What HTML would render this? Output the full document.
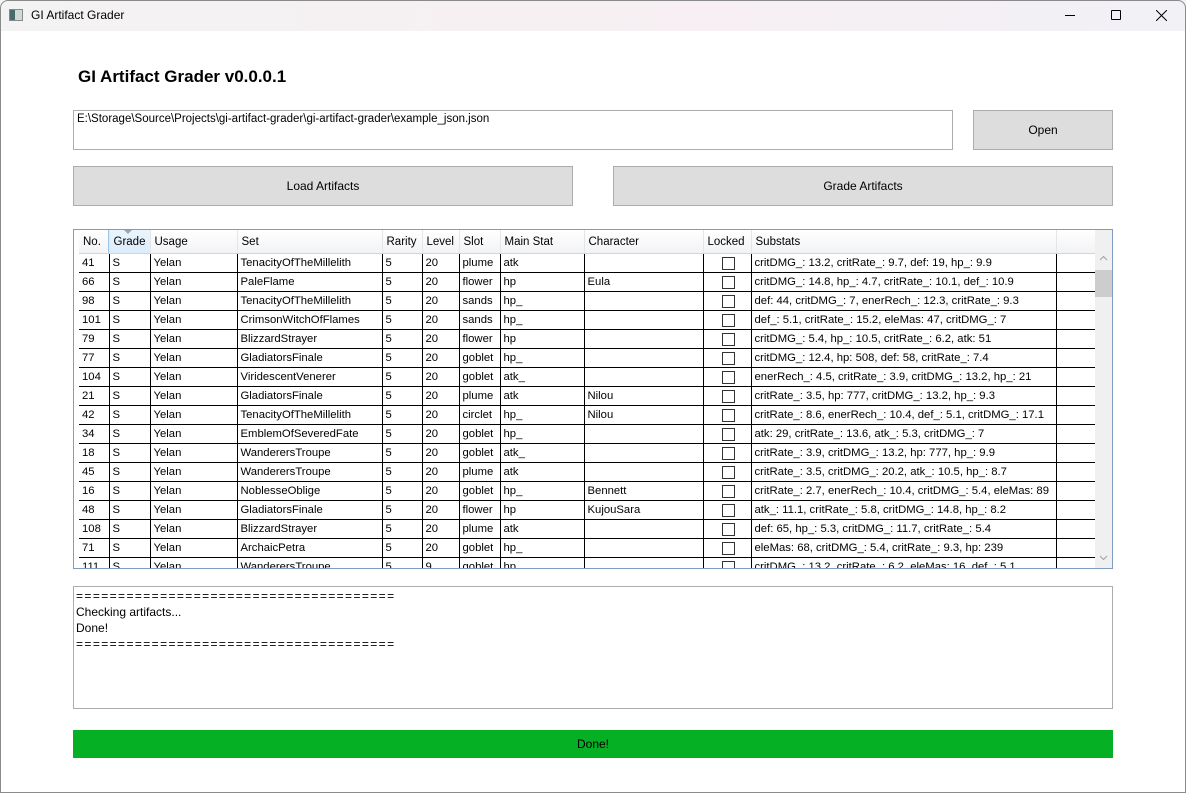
<!DOCTYPE html>
<html><head><meta charset="utf-8">
<style>
*{box-sizing:border-box;margin:0;padding:0}
body{width:1186px;height:793px;background:#fff;font-family:"Liberation Sans",sans-serif;font-size:12px;color:#000;position:relative;overflow:hidden}
.title{position:absolute;left:0;top:0;width:1186px;height:31px;background:linear-gradient(90deg,#f3f3f3,#f7eff3 60%,#f1f1f6);}
.abs{position:absolute}
.btn{position:absolute;background:#dddddd;border:1px solid #adadad;display:flex;align-items:center;justify-content:center;font-size:12px}
.grid{position:absolute;left:73px;top:229px;width:1040px;height:340px;border:1px solid #7f9dc4;overflow:hidden;background:#fff}
table{border-collapse:collapse;table-layout:fixed;position:absolute;left:5px;top:0;width:1016px;font-size:11.3px}
th{height:23px;font-weight:normal;text-align:left;padding-left:4px;padding-top:2px;background:linear-gradient(#fff,#f2f3f5);border-right:1px solid #e3e5e8;border-bottom:1px solid #d5d5d5;white-space:nowrap;overflow:hidden;font-size:11.5px}
td{height:19px;border:1px solid #000;border-top:none;padding-left:3px;padding-top:1px;white-space:nowrap;overflow:hidden;line-height:17px}
td:first-child{border-left:none}
.cb{display:block;width:13px;height:13px;border:1px solid #333;margin:0 auto;background:#fff}
.eq{letter-spacing:1.4px}
</style></head><body>
<div class="title"></div>
<div class="abs" style="left:9px;top:9px;width:14px;height:12px;border:1px solid #8a8a8a;background:linear-gradient(90deg,#4a6a6a 0 5px,#d0d8d8 5px)"></div>
<div class="abs" style="left:31px;top:8px;font-size:12px">GI Artifact Grader</div>
<div class="abs" style="left:1065px;top:15px;width:10px;height:1px;background:#000"></div>
<div class="abs" style="left:1111px;top:10px;width:10px;height:10px;border:1px solid #000;border-radius:1px"></div>
<svg class="abs" style="left:1156px;top:10px" width="11" height="11"><path d="M0 0L11 11M11 0L0 11" stroke="#000" stroke-width="1"/></svg>
<div class="abs" style="left:78px;top:67px;font-size:17px;font-weight:bold">GI Artifact Grader v0.0.0.1</div>
<div class="abs" style="left:73px;top:110px;width:880px;height:40px;border:1px solid #acacac;padding:2px 3px;font-size:11.5px">E:\Storage\Source\Projects\gi-artifact-grader\gi-artifact-grader\example_json.json</div>
<div class="btn" style="left:973px;top:110px;width:140px;height:40px">Open</div>
<div class="btn" style="left:73px;top:166px;width:500px;height:40px">Load Artifacts</div>
<div class="btn" style="left:613px;top:166px;width:500px;height:40px">Grade Artifacts</div>
<div class="grid">
<table>
<colgroup><col style="width:30px"><col style="width:41px"><col style="width:87px"><col style="width:145px"><col style="width:40px"><col style="width:37px"><col style="width:41px"><col style="width:84px"><col style="width:119px"><col style="width:48px"><col style="width:305px"><col style="width:39px"></colgroup>
<tr><th>No.</th><th style="background:linear-gradient(#eaf5fd,#dcecfa)">Grade</th><th>Usage</th><th>Set</th><th>Rarity</th><th>Level</th><th>Slot</th><th>Main Stat</th><th>Character</th><th>Locked</th><th>Substats</th><th></th></tr>
<tr><td>41</td><td>S</td><td>Yelan</td><td>TenacityOfTheMillelith</td><td>5</td><td>20</td><td>plume</td><td>atk</td><td></td><td><span class="cb"></span></td><td>critDMG_: 13.2, critRate_: 9.7, def: 19, hp_: 9.9</td><td></td></tr>
<tr><td>66</td><td>S</td><td>Yelan</td><td>PaleFlame</td><td>5</td><td>20</td><td>flower</td><td>hp</td><td>Eula</td><td><span class="cb"></span></td><td>critDMG_: 14.8, hp_: 4.7, critRate_: 10.1, def_: 10.9</td><td></td></tr>
<tr><td>98</td><td>S</td><td>Yelan</td><td>TenacityOfTheMillelith</td><td>5</td><td>20</td><td>sands</td><td>hp_</td><td></td><td><span class="cb"></span></td><td>def: 44, critDMG_: 7, enerRech_: 12.3, critRate_: 9.3</td><td></td></tr>
<tr><td>101</td><td>S</td><td>Yelan</td><td>CrimsonWitchOfFlames</td><td>5</td><td>20</td><td>sands</td><td>hp_</td><td></td><td><span class="cb"></span></td><td>def_: 5.1, critRate_: 15.2, eleMas: 47, critDMG_: 7</td><td></td></tr>
<tr><td>79</td><td>S</td><td>Yelan</td><td>BlizzardStrayer</td><td>5</td><td>20</td><td>flower</td><td>hp</td><td></td><td><span class="cb"></span></td><td>critDMG_: 5.4, hp_: 10.5, critRate_: 6.2, atk: 51</td><td></td></tr>
<tr><td>77</td><td>S</td><td>Yelan</td><td>GladiatorsFinale</td><td>5</td><td>20</td><td>goblet</td><td>hp_</td><td></td><td><span class="cb"></span></td><td>critDMG_: 12.4, hp: 508, def: 58, critRate_: 7.4</td><td></td></tr>
<tr><td>104</td><td>S</td><td>Yelan</td><td>ViridescentVenerer</td><td>5</td><td>20</td><td>goblet</td><td>atk_</td><td></td><td><span class="cb"></span></td><td>enerRech_: 4.5, critRate_: 3.9, critDMG_: 13.2, hp_: 21</td><td></td></tr>
<tr><td>21</td><td>S</td><td>Yelan</td><td>GladiatorsFinale</td><td>5</td><td>20</td><td>plume</td><td>atk</td><td>Nilou</td><td><span class="cb"></span></td><td>critRate_: 3.5, hp: 777, critDMG_: 13.2, hp_: 9.3</td><td></td></tr>
<tr><td>42</td><td>S</td><td>Yelan</td><td>TenacityOfTheMillelith</td><td>5</td><td>20</td><td>circlet</td><td>hp_</td><td>Nilou</td><td><span class="cb"></span></td><td>critRate_: 8.6, enerRech_: 10.4, def_: 5.1, critDMG_: 17.1</td><td></td></tr>
<tr><td>34</td><td>S</td><td>Yelan</td><td>EmblemOfSeveredFate</td><td>5</td><td>20</td><td>goblet</td><td>hp_</td><td></td><td><span class="cb"></span></td><td>atk: 29, critRate_: 13.6, atk_: 5.3, critDMG_: 7</td><td></td></tr>
<tr><td>18</td><td>S</td><td>Yelan</td><td>WanderersTroupe</td><td>5</td><td>20</td><td>goblet</td><td>atk_</td><td></td><td><span class="cb"></span></td><td>critRate_: 3.9, critDMG_: 13.2, hp: 777, hp_: 9.9</td><td></td></tr>
<tr><td>45</td><td>S</td><td>Yelan</td><td>WanderersTroupe</td><td>5</td><td>20</td><td>plume</td><td>atk</td><td></td><td><span class="cb"></span></td><td>critRate_: 3.5, critDMG_: 20.2, atk_: 10.5, hp_: 8.7</td><td></td></tr>
<tr><td>16</td><td>S</td><td>Yelan</td><td>NoblesseOblige</td><td>5</td><td>20</td><td>goblet</td><td>hp_</td><td>Bennett</td><td><span class="cb"></span></td><td>critRate_: 2.7, enerRech_: 10.4, critDMG_: 5.4, eleMas: 89</td><td></td></tr>
<tr><td>48</td><td>S</td><td>Yelan</td><td>GladiatorsFinale</td><td>5</td><td>20</td><td>flower</td><td>hp</td><td>KujouSara</td><td><span class="cb"></span></td><td>atk_: 11.1, critRate_: 5.8, critDMG_: 14.8, hp_: 8.2</td><td></td></tr>
<tr><td>108</td><td>S</td><td>Yelan</td><td>BlizzardStrayer</td><td>5</td><td>20</td><td>plume</td><td>atk</td><td></td><td><span class="cb"></span></td><td>def: 65, hp_: 5.3, critDMG_: 11.7, critRate_: 5.4</td><td></td></tr>
<tr><td>71</td><td>S</td><td>Yelan</td><td>ArchaicPetra</td><td>5</td><td>20</td><td>goblet</td><td>hp_</td><td></td><td><span class="cb"></span></td><td>eleMas: 68, critDMG_: 5.4, critRate_: 9.3, hp: 239</td><td></td></tr>
<tr><td>111</td><td>S</td><td>Yelan</td><td>WanderersTroupe</td><td>5</td><td>9</td><td>goblet</td><td>hp_</td><td></td><td><span class="cb"></span></td><td>critDMG_: 13.2, critRate_: 6.2, eleMas: 16, def_: 5.1</td><td></td></tr>
</table>
<div class="abs" style="left:1021px;top:0;width:17px;height:338px;background:#f0f0f0"></div>
<div class="abs" style="left:1021px;top:40px;width:17px;height:27px;background:#cdcdcd"></div>
<svg class="abs" style="left:1025px;top:25px" width="9" height="6"><path d="M1 5L4.5 1.5L8 5" stroke="#a0a0a0" fill="none"/></svg>
<svg class="abs" style="left:1025px;top:325px" width="9" height="6"><path d="M1 1L4.5 4.5L8 1" stroke="#a0a0a0" fill="none"/></svg>
<div class="abs" style="left:34px;top:0;width:1px;height:23px;background:#9ec5ea"></div>
<svg class="abs" style="left:50px;top:0" width="8" height="5"><path d="M0 0H8L4 4Z" fill="#9aa6b4"/></svg>
</div>
<div class="abs" style="left:73px;top:586px;width:1040px;height:123px;border:1px solid #acacac;padding:1px 2px;line-height:16px;font-size:12px"><span class="eq">======================================</span><br>Checking artifacts...<br>Done!<br><span class="eq">======================================</span></div>
<div class="abs" style="left:73px;top:730px;width:1040px;height:28px;background:#06b025;display:flex;align-items:center;justify-content:center;font-size:12px">Done!</div>
<div class="abs" style="left:0;top:0;width:1186px;height:793px;border:1px solid #8a8a8a;border-radius:8px 8px 0 0;pointer-events:none"></div>
</body></html>
